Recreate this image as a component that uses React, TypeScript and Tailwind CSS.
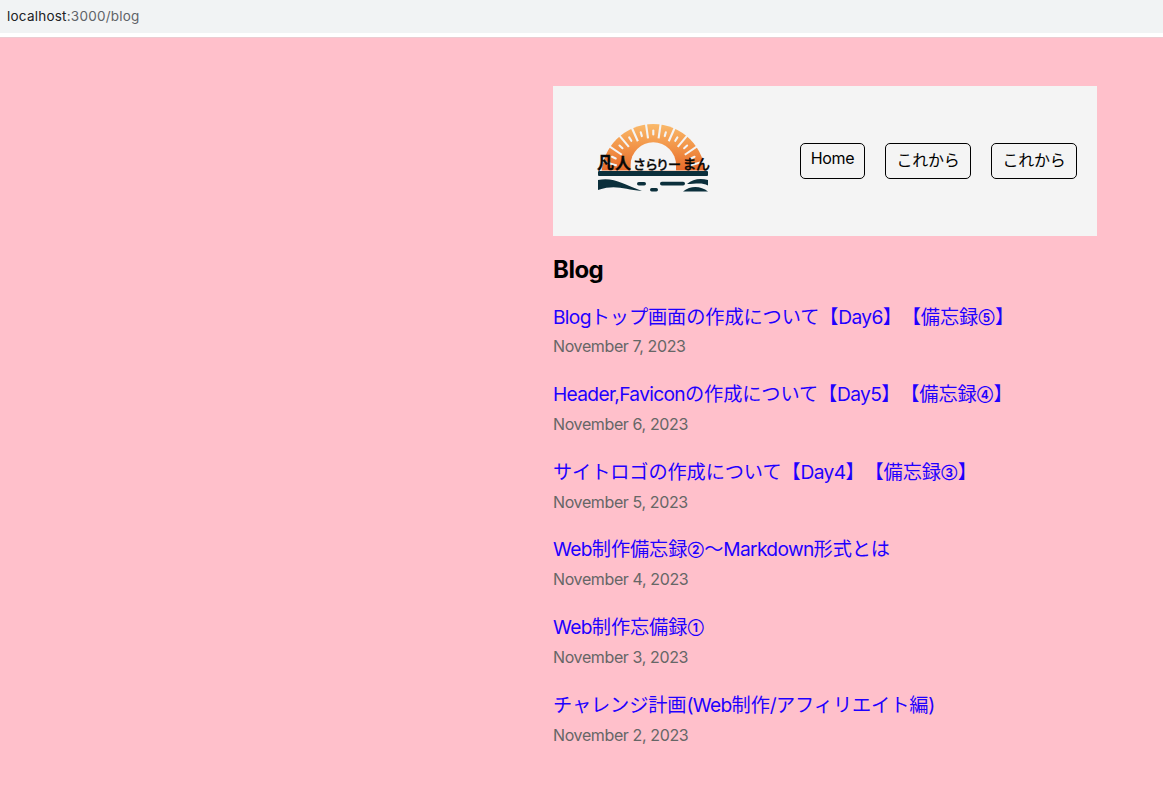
import React from "react";

type Part = { text: string; kind: "latin" | "ja" | "num" };
type Post = { parts: Part[]; date: string };

const la = (text: string): Part => ({ text, kind: "latin" });
const ja = (text: string): Part => ({ text, kind: "ja" });
const num = (text: string): Part => ({ text, kind: "num" });

const posts: Post[] = [
  { parts: [la("Blog"), ja("トップ画面の作成について【"), la("Day6"), ja("】【備忘録"), num("⑤"), ja("】")], date: "November 7, 2023" },
  { parts: [la("Header,Favicon"), ja("の作成について【"), la("Day5"), ja("】【備忘録"), num("④"), ja("】")], date: "November 6, 2023" },
  { parts: [ja("サイトロゴの作成について【"), la("Day4"), ja("】【備忘録"), num("③"), ja("】")], date: "November 5, 2023" },
  { parts: [la("Web"), ja("制作備忘録"), num("②"), ja("〜"), la("Markdown"), ja("形式とは")], date: "November 4, 2023" },
  { parts: [la("Web"), ja("制作忘備録"), num("①")], date: "November 3, 2023" },
  { parts: [ja("チャレンジ計画"), la("(Web"), ja("制作"), la("/"), ja("アフィリエイト編"), la(")")], date: "November 2, 2023" },
];

const kinds = {
  latin: "tracking-[-0.68px]",
  ja: "font-['Noto_Sans_CJK_JP',sans-serif] tracking-[-0.1px] [text-spacing-trim:space-all]",
  num: "inline-block w-[17px] text-center align-[2px] text-[11.5px] leading-none font-bold font-['Inter','Noto_Sans_CJK_JP',sans-serif]",
};

function Logo() {
  const gaps = [-74, -56, -40, -24, -8, 8, 24, 40, 56, 74];
  const slots = [-65, -48, -32, -16, 0, 16, 32, 48, 65];
  const letters: [string, number, number, number, number][] = [
    ["凡", 7, 54, 17, 700],
    ["人", 25, 54, 16, 700],
    ["さ", 43, 53.5, 13, 500],
    ["ら", 55, 53.5, 13, 500],
    ["り", 66, 53.5, 13, 500],
    ["ー", 78, 53.5, 13, 500],
    ["ま", 92.5, 53.5, 14, 500],
    ["ん", 106, 53.5, 14, 500],
  ];
  return (
    <svg width="130" height="85" viewBox="0 0 130 85" role="img">
      <defs>
        <linearGradient id="sun" gradientUnits="userSpaceOnUse" x1="0" y1="8" x2="0" y2="56">
          <stop offset="0" stopColor="#fabb6c" />
          <stop offset="0.5" stopColor="#f29448" />
          <stop offset="1" stopColor="#e66a2a" />
        </linearGradient>
        <clipPath id="horizon">
          <rect x="0" y="0" width="130" height="55.5" />
        </clipPath>
      </defs>
      <g clipPath="url(#horizon)">
        <circle cx="63.3" cy="61" r="52" fill="url(#sun)" />
        <path d="M40.6 56 V50 A22.7 22.7 0 0 1 86 50 V56 Z" fill="#f4f4f4" />
        <g stroke="#f4f4f4" strokeWidth="2.1">
          {gaps.map((a) => (
            <line key={a} x1="63.3" y1="6" x2="63.3" y2="23" transform={`rotate(${a} 63.3 61)`} />
          ))}
          {slots.map((a) => (
            <line key={a} x1="63.3" y1="15.5" x2="63.3" y2="19.5" strokeLinecap="round" transform={`rotate(${a} 63.3 61)`} />
          ))}
        </g>
      </g>
      <g fill="#0b2f3b">
        <rect x="8" y="56" width="110" height="5" rx="1" />
        <path d="M8 65 C24 62 33 69 52 76 C34 75 27 69 8 75 Z" />
        <rect x="47" y="67" width="9" height="3.6" rx="1.8" />
        <rect x="60" y="73" width="8" height="3.4" rx="1.7" />
        <rect x="70" y="66.7" width="25" height="3.8" rx="1.9" />
        <path d="M97 69 C103 63.5 111 63 118 65 V70.5 C112 67 105 69 97 69 Z" />
        <path d="M93 76.5 C101 70 111 71 118 76.5 Z" />
      </g>
      <g fill="#080808" stroke="#080808" strokeWidth="0.3" fontFamily="'Noto Sans CJK JP', sans-serif">
        {letters.map(([ch, x, y, size, weight]) => (
          <text key={ch} x={x} y={y} fontSize={size} fontWeight={weight}>
            {ch}
          </text>
        ))}
      </g>
    </svg>
  );
}

function NavItem({ label, className }: { label: string; className: string }) {
  return (
    <a className={`block h-9 rounded-[5px] border border-black text-center text-base whitespace-nowrap text-black ${className}`}>
      {label}
    </a>
  );
}

export default function App() {
  return (
    <div className="flex h-[787px] w-full flex-col overflow-hidden bg-[#ffc0cb] font-['Inter','Noto_Sans_CJK_JP',sans-serif]">
      <div className="h-[33px] shrink-0 bg-[#f1f3f4] pl-[7px] text-[13.5px] leading-[32px] tracking-[0.23px] text-[#5f6368]">
        <span className="text-[#202124]">localhost</span>:3000/blog
      </div>
      <div className="h-1 shrink-0 bg-white" />
      <div className="h-px shrink-0 bg-[#ebccd2]" />
      <main className="ml-[553px] w-[544px] pt-12">
        <header className="flex h-[150px] items-center bg-[#f4f4f4] pr-5 pl-[37px]">
          <div className="mb-[7px]">
            <Logo />
          </div>
          <nav className="ml-auto flex gap-5">
            <NavItem label="Home" className="w-[65px] leading-[28px] tracking-[-0.35px]" />
            <NavItem label="これから" className="w-[86px] leading-[31px] tracking-[-0.2px] font-['Noto_Sans_CJK_JP',sans-serif]" />
            <NavItem label="これから" className="w-[86px] leading-[31px] tracking-[-0.2px] font-['Noto_Sans_CJK_JP',sans-serif]" />
          </nav>
        </header>
        <h1 className="mt-[17px] h-[34px] text-[24px] leading-[34px] font-bold tracking-[-0.5px] text-black">Blog</h1>
        <ul className="mt-[13.5px]">
          {posts.map((post) => (
            <li key={post.date} className="h-[77.65px]">
              <a className="block h-[31.8px] text-[19.2px] leading-[30px] whitespace-nowrap text-[#1f00ff]">
                {post.parts.map((p, i) => (
                  <span key={i} className={kinds[p.kind]}>
                    {p.text}
                  </span>
                ))}
              </a>
              <small className="block h-7 text-base leading-7 tracking-[-0.38px] text-[#666666]">{post.date}</small>
            </li>
          ))}
        </ul>
      </main>
    </div>
  );
}
